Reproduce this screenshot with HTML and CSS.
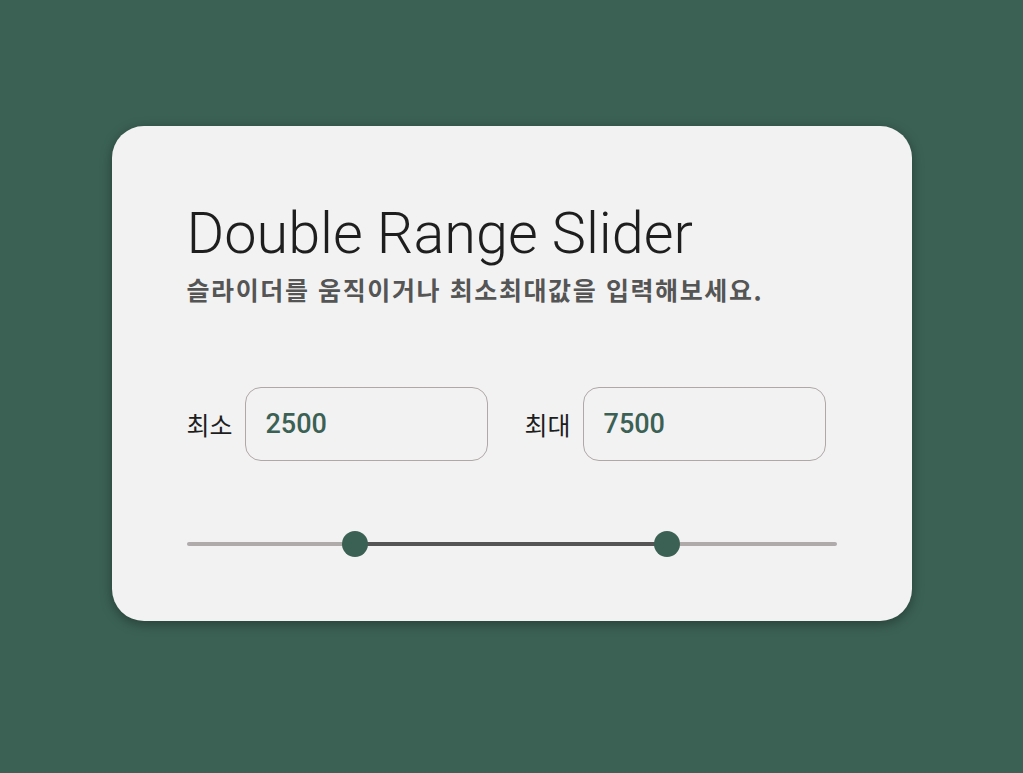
FILE: index.html
```html
<!DOCTYPE html>
<html lang="ko">
<head>
<meta charset="utf-8">
<title>Double Range Slider</title>
<link rel="stylesheet" href="styles.css">
</head>
<body>
<main class="page">
  <section class="card">
    <h1 class="title">Double Range Slider</h1>
    <p class="subtitle">슬라이더를 움직이거나 최소최대값을 입력해보세요.</p>
    <div class="fields">
      <label class="field">
        <span class="field-label">최소</span>
        <input class="field-input" type="text" value="2500">
      </label>
      <label class="field">
        <span class="field-label">최대</span>
        <input class="field-input" type="text" value="7500">
      </label>
    </div>
    <div class="slider">
      <div class="track">
        <div class="fill" style="left: 25.9%; width: 48%;"></div>
      </div>
      <span class="thumb" style="left: 168px;"></span>
      <span class="thumb" style="left: 480px;"></span>
    </div>
  </section>
</main>
</body>
</html>
```
FILE: styles.css
```css
* { box-sizing: border-box; }
html, body { margin: 0; padding: 0; }
body {
  background: #3b6154;
  font-family: "Roboto", "Noto Sans CJK KR", sans-serif;
  min-height: 773px;
}
.page {
  display: flex;
  justify-content: center;
  padding-top: 126px;
}
.card {
  width: 800px;
  height: 495px;
  background: #f2f2f2;
  border-radius: 32px;
  box-shadow: 0 3px 12px rgba(0, 0, 0, 0.35);
  padding: 73px 75px 0 75px;
}
.title {
  margin: 0;
  font-family: "Roboto", "Noto Sans CJK KR", sans-serif;
  font-weight: 300;
  font-size: 57.6px;
  line-height: 70px;
  color: #1e1e1e;
}
.subtitle {
  margin: 2px 0 0;
  font-family: "Noto Sans CJK KR", sans-serif;
  font-weight: 700;
  font-size: 25px;
  letter-spacing: 1.6px;
  line-height: 36px;
  color: #555555;
}
.fields {
  display: flex;
  gap: 37px;
  margin-top: 80px;
}
.field {
  display: flex;
  align-items: center;
  gap: 12px;
}
.field-label {
  font-family: "Noto Sans CJK KR", sans-serif;
  font-size: 25px;
  color: #1e1e1e;
}
.field-input {
  width: 243px;
  height: 74px;
  border: 1px solid #b0a8a8;
  border-radius: 16px;
  background: transparent;
  padding: 0 20px;
  font-family: "Roboto", sans-serif;
  font-weight: 500;
  font-size: 27px;
  color: #3b6154;
  outline: none;
}
.slider {
  position: relative;
  margin-top: 70px;
  height: 26px;
  display: flex;
  align-items: center;
}
.track {
  position: relative;
  width: 100%;
  height: 4px;
  border-radius: 2px;
  background: #b0abab;
}
.fill {
  position: absolute;
  top: 0;
  height: 4px;
  background: #555555;
}
.thumb {
  position: absolute;
  top: 0;
  width: 26px;
  height: 26px;
  margin-left: -13px;
  border-radius: 50%;
  background: #3b6154;
}
```
